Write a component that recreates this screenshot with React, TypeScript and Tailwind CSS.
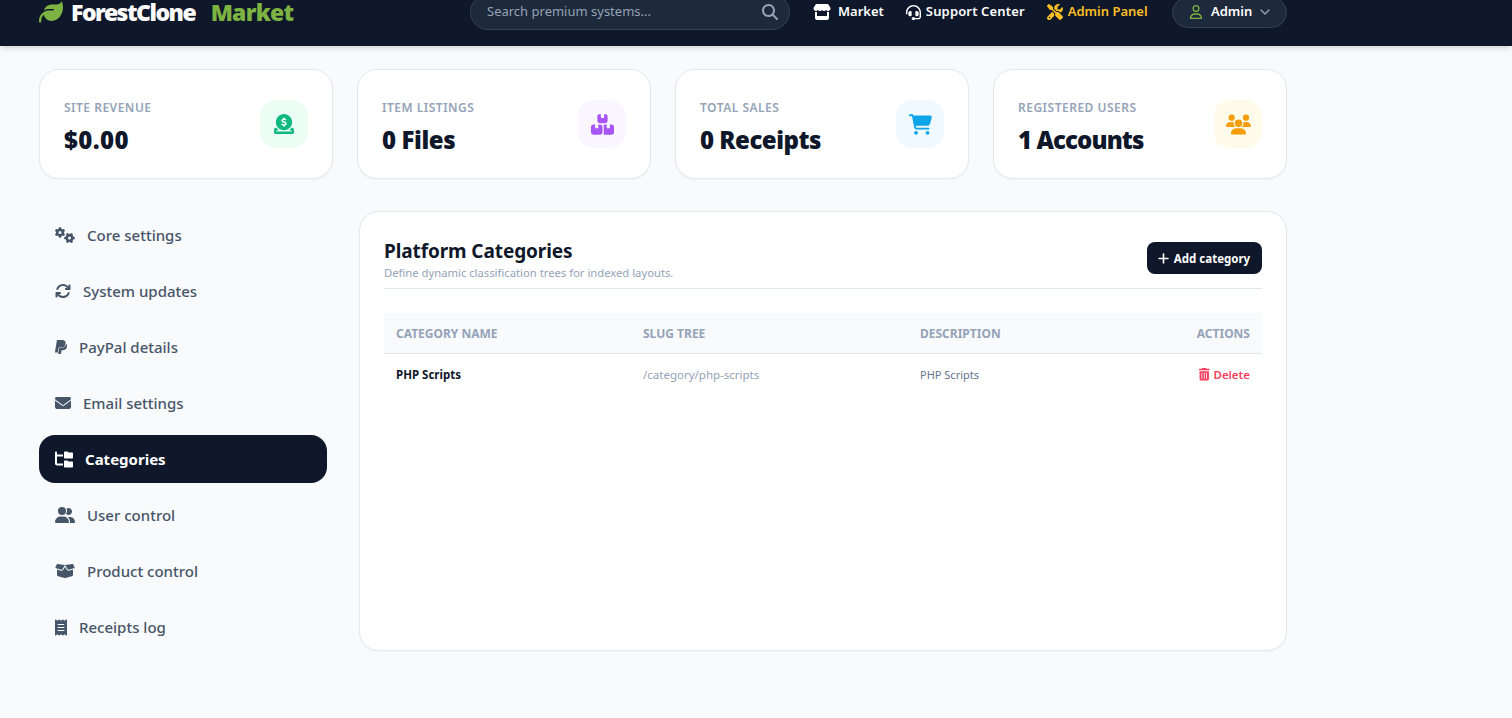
import React from 'react';
import { ChevronDown } from 'lucide-react';
import {
  FaArrowsRotate,
  FaBoxesStacked,
  FaBoxOpen,
  FaCartShopping,
  FaCircleDollarToSlot,
  FaEnvelope,
  FaFolderTree,
  FaGears,
  FaHeadset,
  FaLeaf,
  FaMagnifyingGlass,
  FaPaypal,
  FaPlus,
  FaReceipt,
  FaRegUser,
  FaScrewdriverWrench,
  FaStore,
  FaTrashCan,
  FaUserGroup,
  FaUsers,
} from 'react-icons/fa6';

const stats = [
  { label: 'SITE REVENUE', value: '$0.00', track: 'tracking-[0.4px]', icon: <FaCircleDollarToSlot className="text-[20px]" />, box: 'bg-[#ecfdf5] text-[#10b981]' },
  { label: 'ITEM LISTINGS', value: '0 Files', track: 'tracking-[-0.4px]', icon: <FaBoxesStacked className="text-[23px]" />, box: 'bg-[#faf5ff] text-[#a855f7]' },
  { label: 'TOTAL SALES', value: '0 Receipts', track: 'tracking-[-0.5px]', icon: <FaCartShopping className="text-[23px]" />, box: 'bg-[#f0f9ff] text-[#0ea5e9]' },
  { label: 'REGISTERED USERS', value: '1 Accounts', track: 'tracking-[-0.9px]', icon: <FaUsers className="text-[25px]" />, box: 'bg-[#fffbeb] text-[#f59e0b]' },
];

const menu = [
  { label: 'Core settings', icon: <FaGears className="w-5 text-[20px]" /> },
  { label: 'System updates', icon: <FaArrowsRotate className="text-[16px]" /> },
  { label: 'PayPal details', icon: <FaPaypal className="w-3 h-4 text-[16px]" /> },
  { label: 'Email settings', icon: <FaEnvelope className="text-[16px]" /> },
  { label: 'Categories', icon: <FaFolderTree className="w-[18px] text-[19px]" />, active: true },
  { label: 'User control', icon: <FaUserGroup className="text-[20px]" /> },
  { label: 'Product control', icon: <FaBoxOpen className="text-[20px]" /> },
  { label: 'Receipts log', icon: <FaReceipt className="w-3 h-[17px] text-[17px]" /> },
];

const App: React.FC = () => {
  return (
    <div className="min-h-[718px] bg-[#f8fafc] font-['Noto_Sans',sans-serif]">
      <header className="h-[46px] overflow-hidden bg-[#0f172a] shadow-md">
        <div className="flex h-6 w-[1248px] ml-[39px] items-center">
          <div className="flex items-center gap-2 w-[431px] font-black text-[23px] leading-none">
            <FaLeaf className="text-[#7cb342] text-[24px]" />
            <span className="text-white tracking-[-1.5px]">
              ForestClone <span className="ml-[11px] tracking-[-0.8px] text-[#7cb342]">Market</span>
            </span>
          </div>
          <div className="flex h-9 w-[320px] shrink-0 items-center justify-between rounded-full border border-[#334155] bg-[#1e293b] pl-4 pr-[11px]">
            <span className="text-[13px] text-[#94a3b8]">Search premium systems...</span>
            <FaMagnifyingGlass className="text-[16px] text-[#94a3b8]" />
          </div>
          <nav className="flex items-center ml-[23px] text-[13px] font-semibold text-white">
            <a className="flex items-center gap-[7px]">
              <FaStore className="text-[18px]" /> Market
            </a>
            <a className="flex items-center gap-[5px] ml-[22px]">
              <FaHeadset className="text-[15px]" /> <span className="tracking-[0.15px]">Support Center</span>
            </a>
            <a className="flex items-center gap-[5px] ml-[22px] text-[#fbbf24]">
              <FaScrewdriverWrench className="text-[16px]" /> Admin Panel
            </a>
          </nav>
          <div className="ml-auto flex h-[31px] w-[115px] items-center gap-2 rounded-full border border-[#334155] bg-[#1e293b] pl-4 text-[13px] font-semibold text-white">
            <FaRegUser className="text-[14px] text-[#7cb342]" />
            Admin
            <ChevronDown size={16} className="-ml-[3px] text-[#94a3b8]" />
          </div>
        </div>
      </header>

      <main className="ml-[39px] w-[1248px] pt-[23px]">
        <section className="grid grid-cols-4 gap-6">
          {stats.map((s) => (
            <div
              key={s.label}
              className="flex h-[110px] items-center justify-between rounded-[20px] border border-[#e2e8f0] bg-white px-6 shadow-[0_1px_2px_rgba(0,0,0,0.04)]"
            >
              <div className="pt-[7px]">
                <div className="text-[12px] font-semibold tracking-[0.5px] text-[#94a3b8]">{s.label}</div>
                <div className={`mt-[7px] text-[24px] font-black leading-8 text-[#0f172a] ${s.track}`}>{s.value}</div>
              </div>
              <div className={`flex h-12 w-12 items-center justify-center rounded-2xl ${s.box}`}>{s.icon}</div>
            </div>
          ))}
        </section>

        <section className="mt-8 flex items-start">
          <aside className="flex w-[288px] shrink-0 flex-col gap-2">
            {menu.map((m) => (
              <div
                key={m.label}
                className={`flex h-12 items-center gap-3 rounded-2xl px-4 text-[15px] ${
                  m.active ? 'bg-[#0f172a] font-bold text-white' : 'font-medium text-[#475569]'
                }`}
              >
                {m.icon}
                {m.label}
              </div>
            ))}
          </aside>

          <div className="ml-8 h-[440px] w-[928px] rounded-[20px] border border-[#e2e8f0] bg-white px-6 pt-[27px] shadow-[0_1px_2px_rgba(0,0,0,0.04)]">
            <div className="flex h-[50px] items-start justify-between border-b border-[#e2e8f0]">
              <div>
                <h2 className="text-[19px] font-bold leading-[24px] tracking-[-0.1px] text-[#0f172a]">Platform Categories</h2>
                <p className="mt-[2px] text-[11.25px] leading-[16px] text-[#94a3b8]">Define dynamic classification trees for indexed layouts.</p>
              </div>
              <button className="mt-[3px] flex h-8 w-[115px] items-center justify-center gap-1 rounded-lg bg-[#0f172a] pr-[2px] text-[11.5px] font-bold text-white">
                <FaPlus className="text-[13px]" /> <span className="pt-px">Add category</span>
              </button>
            </div>

            <table className="mt-6 w-full table-fixed border-collapse text-left text-[12px]">
              <thead>
                <tr className="h-[40px] border-b border-[#e2e8f0] bg-[#f8fafc] text-[#94a3b8]">
                  <th className="w-[247px] px-3 pt-[2px] font-bold">CATEGORY NAME</th>
                  <th className="w-[277px] px-3 pt-[2px] font-bold">SLUG TREE</th>
                  <th className="px-3 pt-[2px] font-bold">DESCRIPTION</th>
                  <th className="w-[120px] px-3 pt-[2px] text-right font-bold">ACTIONS</th>
                </tr>
              </thead>
              <tbody>
                <tr className="h-[42px]">
                  <td className="px-3 text-[11.5px] font-bold text-[#0f172a]">PHP Scripts</td>
                  <td className="px-3 text-[11.5px] text-[#94a3b8]">/category/php-scripts</td>
                  <td className="px-3 pt-[2px] text-[11px] text-[#64748b]">PHP Scripts</td>
                  <td className="px-3">
                    <span className="flex items-center justify-end gap-[3px] text-[11.5px] font-semibold text-[#f43f5e]">
                      <FaTrashCan className="text-[12.5px]" /> Delete
                    </span>
                  </td>
                </tr>
              </tbody>
            </table>
          </div>
        </section>
      </main>
    </div>
  );
};

export default App;
